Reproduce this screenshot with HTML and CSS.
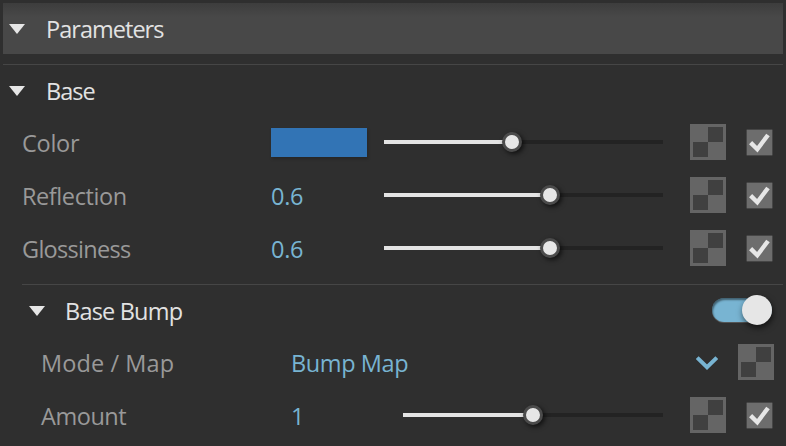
FILE: index.html
```
<!DOCTYPE html>
<html lang="en">
<head>
<meta charset="utf-8">
<title>Parameters</title>
<link rel="stylesheet" href="styles.css">
</head>
<body>
<svg class="defs" width="0" height="0" aria-hidden="true">
  <symbol id="tri" viewBox="0 0 16 10"><path d="M0 0H16L8 10Z" fill="#e6e6e6"/></symbol>
  <symbol id="map" viewBox="0 0 36 36"><path d="M0 0H36V36H0Z" fill="#656565"/><path d="M18 3H33V18H18ZM3 18H18V33H3Z" fill="#404040"/></symbol>
  <symbol id="check" viewBox="0 0 27 27"><rect x=".5" y=".5" width="26" height="26" rx="1" fill="#6d6d6d" stroke="#464646"/><path d="M4.6 13.6L11.3 20.2L22 6" fill="none" stroke="#e6e6e6" stroke-width="4.4"/></symbol>
</svg>
<main class="panel">
  <header class="head main-head"><svg class="tri"><use href="#tri"/></svg><h1 class="t-parameters">Parameters</h1></header>
  <section class="base">
    <div class="head"><svg class="tri"><use href="#tri"/></svg><h2 class="t-base">Base</h2></div>
    <div class="row">
      <span class="label t-color">Color</span><span class="swatch"></span>
      <div class="slider"><div class="fill" style="width:128px"></div><i class="thumb"></i></div>
      <svg class="map"><use href="#map"/></svg><svg class="check"><use href="#check"/></svg>
    </div>
    <div class="row">
      <span class="label t-reflection">Reflection</span><span class="value">0.6</span>
      <div class="slider"><div class="fill" style="width:166px"></div><i class="thumb"></i></div>
      <svg class="map"><use href="#map"/></svg><svg class="check"><use href="#check"/></svg>
    </div>
    <div class="row">
      <span class="label t-glossiness">Glossiness</span><span class="value">0.6</span>
      <div class="slider"><div class="fill" style="width:166px"></div><i class="thumb"></i></div>
      <svg class="map"><use href="#map"/></svg><svg class="check"><use href="#check"/></svg>
    </div>
  </section>
  <section class="bump">
    <div class="head"><svg class="tri"><use href="#tri"/></svg><h2 class="t-bump">Base Bump</h2><span class="toggle"><i class="knob"></i></span></div>
    <div class="row select-row">
      <span class="label t-mode">Mode / Map</span><span class="value t-bumpmap">Bump Map</span>
      <svg class="chevron" viewBox="0 0 22 14"><path d="M1.2 1.6L11 11.2L20.8 1.6" fill="none" stroke="#78b4d2" stroke-width="4"/></svg>
      <svg class="map"><use href="#map"/></svg>
    </div>
    <div class="row">
      <span class="label t-amount">Amount</span><span class="value">1</span>
      <div class="slider"><div class="fill" style="width:130px"></div><i class="thumb"></i></div>
      <svg class="map"><use href="#map"/></svg><svg class="check"><use href="#check"/></svg>
    </div>
  </section>
</main>
</body>
</html>
```
FILE: styles.css
```
* { box-sizing: border-box; }
body {
  margin: 0;
  height: 446px;
  overflow: hidden;
  background: #2f2f2f;
  color: #e2e2e2;
  font: 23.5px/32px "Open Sans", "Noto Sans", sans-serif;
}
svg { display: block; flex: none; }
.defs { position: absolute; }
.panel { padding: 3px; }
h1, h2 { margin: 0; font: inherit; white-space: nowrap; }
.head { display: flex; align-items: center; height: 51px; padding-left: 6px; }
.main-head { background: linear-gradient(#3d3d3d, #484848 14px); }
.tri { width: 16px; height: 10px; margin-right: 21px; }
.base { margin-top: 10px; border-top: 1px solid #464646; }
.base h2 { padding-top: 1px; }
.row {
  display: grid;
  grid-template-columns: 249px 113px 279px 36px 27px;
  align-items: center;
  height: 53px;
  padding: 0 0 1px 19px;
}
.label { color: #999; white-space: nowrap; padding-top: 1px; }
.value { color: #78b4d2; white-space: nowrap; padding-top: 1px; letter-spacing: -.3px; }
.t-parameters { letter-spacing: -.97px; }
.t-base { letter-spacing: -1px; }
.t-color { letter-spacing: -.25px; }
.t-reflection { letter-spacing: -.42px; }
.t-glossiness { letter-spacing: -.7px; }
.t-bump { letter-spacing: -.8px; }
.t-mode { letter-spacing: .1px; }
.t-bumpmap { letter-spacing: -.4px; }
.t-amount { letter-spacing: -.45px; }
.swatch { width: 96px; height: 29px; background: #3274b5; box-shadow: 1px 2px 3px #0003; }
.slider { display: flex; align-items: center; height: 4px; background: #232323; }
.fill { height: 4px; background: #e4e4e4; }
.thumb {
  flex: none;
  width: 20px;
  height: 20px;
  margin-left: -10px;
  border: 3px solid #4b4b4b;
  border-radius: 50%;
  background: #e6e6e6;
  box-shadow: 2px 2px 5px #000a;
}
.map { width: 36px; height: 36px; margin-left: 27px; }
.check { width: 27px; height: 27px; margin: 1px 0 0 47px; }
.bump { margin: 9px 0 0 19px; border-top: 1px solid #464646; }
.bump .row { grid-template-columns: 250px 112px 260px 36px 27px; }
.bump .select-row { grid-template-columns: 250px 405px 22px 36px; }
.chevron { width: 22px; height: 14px; margin-top: 1px; }
.select-row .map { margin-left: 20px; }
.bump .head { padding-left: 7px; }
.bump .tri { margin-right: 20px; }
.toggle {
  display: flex;
  align-items: center;
  justify-content: flex-end;
  width: 60px;
  height: 24px;
  margin: 0 11px 1px auto;
  border-radius: 12px;
  background: #78b4d2;
  box-shadow: inset 1px 2px 2px #0007, 0 1px #555;
}
.knob { width: 30px; height: 30px; flex: none; border-radius: 50%; background: #e6e6e6; box-shadow: 1px 3px 6px #0009; }
```
